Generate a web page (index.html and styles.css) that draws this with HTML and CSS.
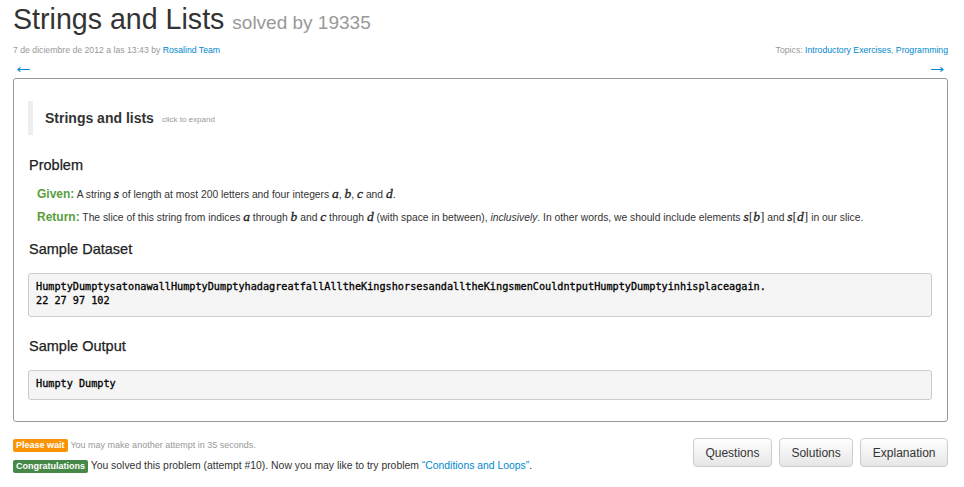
FILE: index.html
```html
<!DOCTYPE html>
<html>
<head>
<meta charset="utf-8">
<link rel="stylesheet" href="styles.css">
</head>
<body>
<div class="page">
  <h1 class="title">Strings and Lists <small class="solved">solved by 19335</small></h1>
  <div class="meta">
    <span class="date">7 de diciembre de 2012 a las 13:43 by <a href="#">Rosalind Team</a></span>
    <span class="topics">Topics: <a href="#">Introductory Exercises</a>, <a href="#">Programming</a></span>
  </div>
  <div class="nav">
    <a href="#" class="arrow">&larr;</a>
    <a href="#" class="arrow">&rarr;</a>
  </div>
  <div class="problem-box">
    <blockquote class="expand">
      <span class="expand-title">Strings and lists</span>
      <span class="expand-hint">click to expand</span>
    </blockquote>
    <h2 class="section">Problem</h2>
    <p class="line"><span class="label">Given:</span> A string <i class="m">s</i> of length at most 200 letters and four integers <i class="m">a</i>, <i class="m">b</i>, <i class="m">c</i> and <i class="m">d</i>.</p>
    <p class="line"><span class="label">Return:</span> The slice of this string from indices <i class="m">a</i> through <i class="m">b</i> and <i class="m">c</i> through <i class="m">d</i> (with space in between), <em>inclusively</em>. In other words, we should include elements <i class="m">s</i><span class="mb">[</span><i class="m">b</i><span class="mb">]</span> and <i class="m">s</i><span class="mb">[</span><i class="m">d</i><span class="mb">]</span> in our slice.</p>
    <h2 class="section sample">Sample Dataset</h2>
    <pre class="code">HumptyDumptysatonawallHumptyDumptyhadagreatfallAlltheKingshorsesandalltheKingsmenCouldntputHumptyDumptyinhisplaceagain.
22 27 97 102</pre>
    <h2 class="section sample after-code">Sample Output</h2>
    <pre class="code">Humpty Dumpty</pre>
  </div>
  <div class="footer">
    <div class="status">
      <p class="msg"><span class="badge wait">Please wait</span> <span class="muted">You may make another attempt in 35 seconds.</span></p>
      <p class="msg"><span class="badge ok">Congratulations</span> You solved this problem (attempt #10). Now you may like to try problem <a href="#">“Conditions and Loops”</a>.</p>
    </div>
    <div class="buttons">
      <button class="btn">Questions</button>
      <button class="btn">Solutions</button>
      <button class="btn">Explanation</button>
    </div>
  </div>
</div>
</body>
</html>
```

FILE: styles.css
```css
html, body {
  margin: 0;
  padding: 0;
  background: #fff;
}
body {
  font-family: "Liberation Sans", Arial, sans-serif;
  color: #333;
}
a {
  color: #0088cc;
  text-decoration: none;
}
.page {
  margin: 0 16px 0 13px;
}
.title {
  margin: 1px 0 0;
  font-size: 28.6px;
  font-weight: normal;
  line-height: 36px;
  color: #333;
}
.solved {
  font-size: 19px;
  color: #999;
}
.meta {
  display: flex;
  justify-content: space-between;
  margin-top: 3px;
  font-size: 8.7px;
  line-height: 12px;
  color: #999;
}
.nav {
  display: flex;
  justify-content: space-between;
  margin-top: 2px;
  height: 20px;
}
.arrow {
  font-size: 21px;
  line-height: 16px;
}
.problem-box {
  border: 1px solid #999;
  border-radius: 3px;
  padding: 22px 15px 21px 14px;
}
.expand {
  margin: 0;
  border-left: 5px solid #eee;
  padding: 0 0 0 12px;
  height: 34px;
  display: flex;
  align-items: center;
}
.expand-title {
  font-size: 14px;
  font-weight: bold;
  color: #333;
}
.expand-hint {
  font-size: 8px;
  color: #999;
  margin-left: 8px;
  margin-top: 3px;
}
.section {
  margin: 20px 0 10px 1px;
  font-size: 14.5px;
  font-weight: normal;
  line-height: 20px;
  color: #222;
  -webkit-text-stroke: 0.25px #222;
}
.sample {
  margin-top: 12px;
  margin-bottom: 14px;
}
.after-code {
  margin-top: 19px;
}
.line {
  margin: 0 0 4px 9px;
  font-size: 10.3px;
  line-height: 18px;
  color: #333;
}
.label {
  font-size: 12px;
  font-weight: bold;
  color: #5a9e3e;
}
.m {
  font-family: "Liberation Serif", "Times New Roman", serif;
  font-style: italic;
  font-size: 13.5px;
  color: #222;
  -webkit-text-stroke: 0.3px #222;
}
.mb {
  font-family: "Liberation Serif", serif;
  font-size: 13.5px;
}
em {
  font-style: italic;
}
.code {
  margin: 0;
  background: #f5f5f5;
  border: 1px solid #ccc;
  border-radius: 3px;
  padding: 6px 7px 8px;
  font-family: "DejaVu Sans Mono", monospace;
  font-size: 10.2px;
  font-weight: normal;
  line-height: 14px;
  color: #000;
  -webkit-text-stroke: 0.3px #000;
}
.footer {
  display: flex;
  justify-content: space-between;
  margin-top: 16px;
}
.msg {
  margin: 0 0 7px;
  font-size: 10.4px;
  line-height: 14px;
  color: #333;
}
.muted {
  color: #999;
  font-size: 9px;
}
.badge {
  display: inline-block;
  padding: 0 3px;
  border-radius: 2px;
  font-size: 9px;
  font-weight: bold;
  line-height: 13px;
  color: #fff;
}
.wait {
  background: #f89406;
}
.ok {
  background: #468847;
}
.buttons {
  display: flex;
  gap: 7px;
}
.btn {
  height: 29px;
  padding: 0 11.5px;
  border: 1px solid #ccc;
  border-radius: 4px;
  background: linear-gradient(#fff, #e6e6e6);
  font-family: "Liberation Sans", Arial, sans-serif;
  font-size: 12px;
  color: #333;
}
```
